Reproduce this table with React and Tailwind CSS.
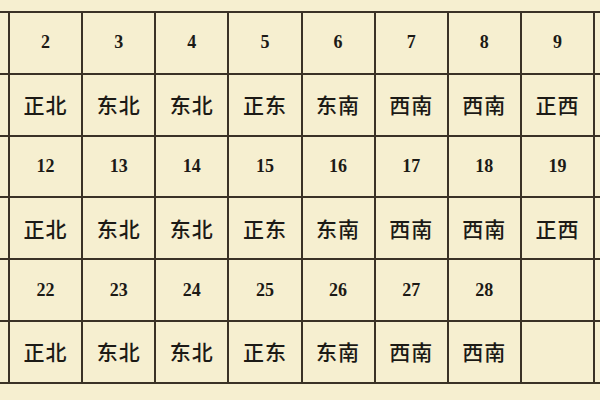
import React from 'react';

const rows = [
  ['2', '3', '4', '5', '6', '7', '8', '9'],
  ['正北', '东北', '东北', '正东', '东南', '西南', '西南', '正西'],
  ['12', '13', '14', '15', '16', '17', '18', '19'],
  ['正北', '东北', '东北', '正东', '东南', '西南', '西南', '正西'],
  ['22', '23', '24', '25', '26', '27', '28', ''],
  ['正北', '东北', '东北', '正东', '东南', '西南', '西南', ''],
];

const App = () => {
  return (
    <div className="w-[600px] h-[400px] overflow-hidden bg-[#f6efd0] pt-[11px]">
      <div className="grid grid-cols-[8px_repeat(8,71.125px)_1fr] gap-[2px] py-[2px] bg-[#3a3226]">
        {rows.map((row, r) => {
          const isNum = r % 2 === 0;
          return (
            <React.Fragment key={r}>
              <div className="h-[59.83px] bg-[#f6efd0]" />
              {row.map((text, c) => (
                <div
                  key={c}
                  className={
                    isNum
                      ? "h-[59.83px] bg-[#f6efd0] flex items-center justify-center font-['Liberation_Serif',serif] font-bold text-[18px] text-[#1c1a16]"
                      : "h-[59.83px] bg-[#f6efd0] flex items-center justify-center font-['Noto_Sans_CJK_SC',sans-serif] font-medium text-[21px] tracking-[1px] text-[#1c1a16]"
                  }
                >
                  {text}
                </div>
              ))}
              <div className="h-[59.83px] bg-[#f6efd0]" />
            </React.Fragment>
          );
        })}
      </div>
    </div>
  );
};

export default App;
